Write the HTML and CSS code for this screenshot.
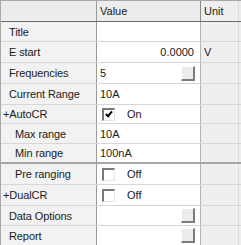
FILE: index.html
```html
<!DOCTYPE html>
<html lang="en">
<head>
  <meta charset="UTF-8">
  <title>Properties</title>
  <link rel="stylesheet" href="styles.css">
</head>
<body>
<div class="grid">
  <div class="row head">
    <div class="c name"></div>
    <div class="c val">Value</div>
    <div class="c unit">Unit</div>
  </div>
  <div class="row h20">
    <div class="c name">Title</div>
    <div class="c val"></div>
    <div class="c unit"></div>
  </div>
  <div class="row">
    <div class="c name">E start</div>
    <div class="c val num">0.0000</div>
    <div class="c unit">V</div>
  </div>
  <div class="row">
    <div class="c name">Frequencies</div>
    <div class="c val">5<span class="dots"></span></div>
    <div class="c unit"></div>
  </div>
  <div class="row">
    <div class="c name">Current Range</div>
    <div class="c val">10A</div>
    <div class="c unit"></div>
  </div>
  <div class="row h19">
    <div class="c name group">+AutoCR</div>
    <div class="c val"><span class="check on"></span><span class="state">On</span></div>
    <div class="c unit"></div>
  </div>
  <div class="row h20">
    <div class="c name sub">Max range</div>
    <div class="c val">10A</div>
    <div class="c unit"></div>
  </div>
  <div class="row h20 split">
    <div class="c name sub">Min range</div>
    <div class="c val">100nA</div>
    <div class="c unit"></div>
  </div>
  <div class="row">
    <div class="c name pre">Pre ranging</div>
    <div class="c val"><span class="check"></span><span class="state">Off</span></div>
    <div class="c unit"></div>
  </div>
  <div class="row">
    <div class="c name group">+DualCR</div>
    <div class="c val"><span class="check"></span><span class="state">Off</span></div>
    <div class="c unit"></div>
  </div>
  <div class="row h20">
    <div class="c name">Data Options</div>
    <div class="c val"><span class="dots"></span></div>
    <div class="c unit"></div>
  </div>
  <div class="row h20">
    <div class="c name">Report</div>
    <div class="c val"><span class="dots"></span></div>
    <div class="c unit"></div>
  </div>
</div>
</body>
</html>
```

FILE: styles.css
```css
body {
  margin: 0;
  background: #efefef;
  font-family: "Liberation Sans", Arial, sans-serif;
  font-size: 11px;
  color: #1a1a1a;
  overflow: hidden;
}

.grid {
  width: 241px;
  border-top: 1px solid #a8a8a8;
  border-left: 1px solid #a8a8a8;
  box-sizing: border-box;
}

.row {
  display: flex;
  height: 21px;
  box-sizing: border-box;
  border-bottom: 1px solid #d6d6d6;
}

.row.h20 { height: 20px; }
.row.h19 { height: 19px; }

.row.head {
  height: 21px;
  background: #ececec;
  border-bottom: 1px solid #6a6a6a;
}

.row.split {
  border-bottom: 2px solid #a6a6a6;
}

.c {
  box-sizing: border-box;
  display: flex;
  align-items: center;
  white-space: nowrap;
  overflow: hidden;
}

.name {
  width: 96px;
  padding-left: 8px;
  background: #f2f2f2;
  border-right: 1px solid #9a9a9a;
  letter-spacing: -0.1px;
}

.name.group { padding-left: 2px; }
.name.sub { padding-left: 14px; }
.name.pre { padding-left: 14px; }

.val {
  width: 104px;
  padding-left: 3px;
  padding-right: 5px;
  background: #fff;
  border-right: 1px solid #b4b4b4;
}

.head .val,
.head .name { background: #ececec; }

.head .val { border-right-color: #8a8a8a; }

.val.num { justify-content: flex-end; padding-right: 6px; }

.unit {
  width: 38px;
  padding-left: 3px;
  background: #efefef;
  border-right: 1px solid #dcdcdc;
}

.dots {
  margin-left: auto;
  width: 14px;
  height: 15px;
  box-sizing: border-box;
  background: #ececec;
  border-top: 1px solid #fff;
  border-left: 1px solid #fff;
  border-right: 2px solid #7c7c7c;
  border-bottom: 2px solid #7c7c7c;
}

.check {
  margin-left: 2px;
  width: 13px;
  height: 13px;
  box-sizing: border-box;
  background: #fff;
  border-top: 2px solid #7a7a7a;
  border-left: 2px solid #7a7a7a;
  border-right: 1px solid #e4e4e4;
  border-bottom: 1px solid #e4e4e4;
  position: relative;
}

.check.on::after {
  content: "";
  position: absolute;
  left: 3px;
  top: 0;
  width: 2px;
  height: 5px;
  border-right: 2px solid #000;
  border-bottom: 2px solid #000;
  transform: rotate(40deg);
}

.state { margin-left: 12px; }
```
